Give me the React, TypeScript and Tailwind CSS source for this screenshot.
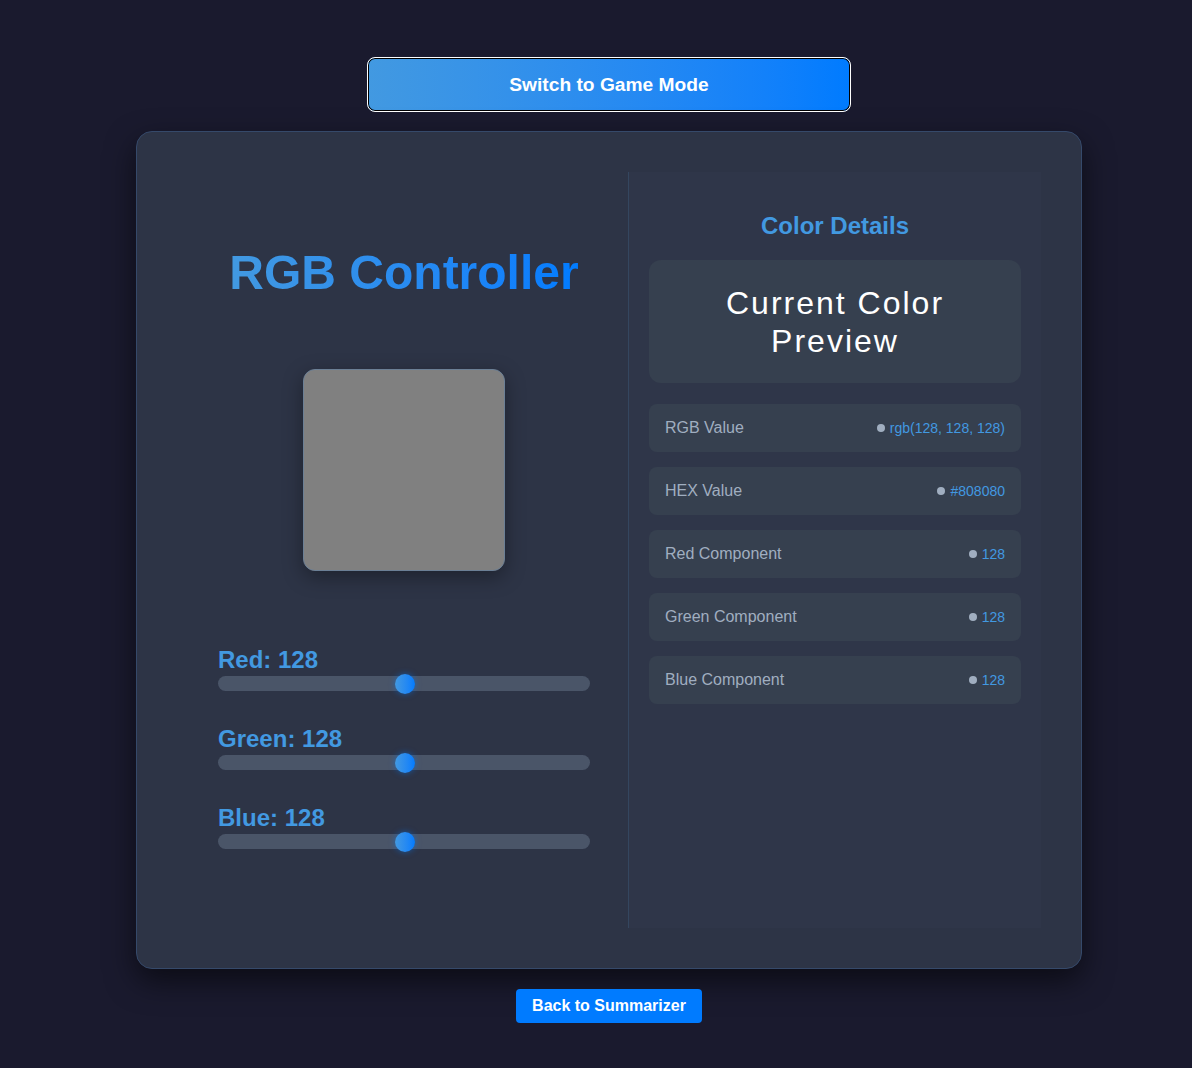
import React from "react";

const font = { fontFamily: '"Liberation Sans", Arial, sans-serif' };

function Slider({ label }: { label: string }) {
  const value = 128;
  const pct = value / 255;
  return (
    <div className="w-[372px]">
      <div className="text-[24px] leading-[28px] font-bold text-[#4299e1]">
        {label}: {value}
      </div>
      <div className="relative mt-[2px] h-[15px] rounded-full bg-[#4a5568]">
        <div
          className="absolute top-1/2 h-[20px] w-[20px] -translate-y-1/2 rounded-full bg-linear-to-r from-[#4299e1] to-[#007bff] shadow-[0_0_6px_rgba(0,123,255,0.5)]"
          style={{ left: `${pct * (372 - 20)}px` }}
        />
      </div>
    </div>
  );
}

function InfoRow({ label, value }: { label: string; value: string }) {
  return (
    <div className="flex h-[48px] items-center justify-between rounded-lg bg-[#36404f] px-4">
      <span className="text-[16px] text-[#a0aec0]">{label}</span>
      <span className="flex items-center text-[14px] text-[#4299e1]">
        <span className="mr-[5px] inline-block h-[8px] w-[8px] rounded-full bg-[#a0aec0]" />
        {value}
      </span>
    </div>
  );
}

export default function App() {
  return (
    <div
      className="flex min-h-screen flex-col items-center bg-[#1a1a2e] pl-[26px] pt-[57px] pb-[45px]"
      style={font}
    >
      <button className="h-[55px] w-[484px] rounded-lg border border-white bg-linear-to-r from-[#4299e1] to-[#007bff] pt-[1px] text-[19.2px] font-bold text-white shadow-[inset_0_0_0_1px_#000]">
        Switch to Game Mode
      </button>

      <div className="mt-[19px] flex w-[946px] rounded-2xl border border-[#35496a] bg-[#2d3446] p-[40px] shadow-[0_12px_30px_rgba(0,0,0,0.55)]">
        <div className="flex flex-1 flex-col items-center pl-[3px] pt-[73px] pb-[79px]">
          <h1 className="bg-linear-to-r from-[#4299e1] to-[#007bff] bg-clip-text text-[48px] leading-[55px] font-bold text-transparent">
            RGB Controller
          </h1>
          <div className="mt-[69px] h-[202px] w-[202px] rounded-xl border border-[#6b7f95] bg-[#808080] shadow-[0_6px_20px_rgba(0,0,0,0.35)]" />
          <div className="mt-[75px] flex flex-col gap-[34px]">
            <Slider label="Red" />
            <Slider label="Green" />
            <Slider label="Blue" />
          </div>
        </div>

        <div className="flex w-[413px] flex-col border-l border-[#34465f] bg-[#2f3649] px-[20px] pt-[40px]">
          <h2 className="text-center text-[24px] leading-[28px] font-bold text-[#4299e1]">
            Color Details
          </h2>
          <div className="mt-[20px] rounded-xl bg-[#36404f] px-6 pt-[25px] pb-[23px] text-center text-[32px] leading-[37.5px] tracking-[2px] text-white">
            Current Color Preview
          </div>
          <div className="mt-[21px] flex flex-col gap-[15px]">
            <InfoRow label="RGB Value" value="rgb(128, 128, 128)" />
            <InfoRow label="HEX Value" value="#808080" />
            <InfoRow label="Red Component" value="128" />
            <InfoRow label="Green Component" value="128" />
            <InfoRow label="Blue Component" value="128" />
          </div>
        </div>
      </div>

      <button className="mt-[20px] h-[34px] rounded bg-[#007bff] px-4 text-[16px] font-bold text-white">
        Back to Summarizer
      </button>
    </div>
  );
}
